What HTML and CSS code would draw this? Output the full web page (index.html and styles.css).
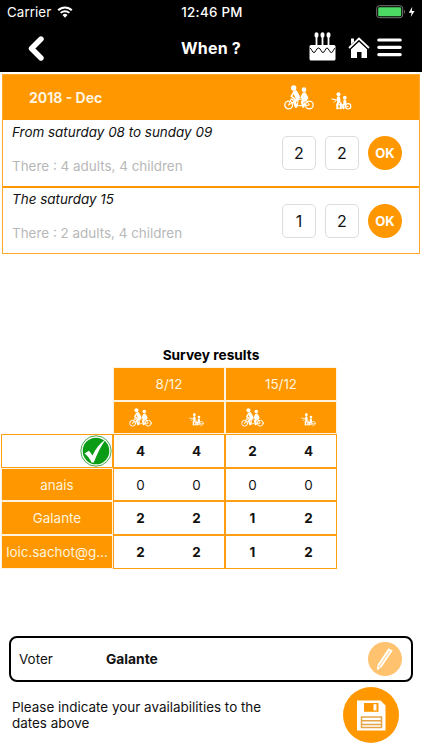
FILE: index.html
```html
<!DOCTYPE html>
<html lang="en">

<head>
    <meta charset="UTF-8">
    <meta name="viewport" content="width=device-width, initial-scale=1.0">
    <title>When ?</title>
    <link rel="stylesheet" href="styles.css">
</head>

<body>
    <!-- Shared icons -->
    <svg class="symbols">
        <symbol id="tandem" viewBox="0 0 90 75">
            <g fill="none" stroke="#fff" stroke-linecap="round" stroke-linejoin="round">
                <circle cx="14" cy="60" r="11.5" stroke-width="3.8" />
                <circle cx="76" cy="60" r="11.5" stroke-width="3.8" />
                <path d="M14 60L22 41L40 62H61L76 60L64 42M22 43L43 42L40 62M43 42L64 44L61 62M14 60L30 50" stroke-width="3" />
                <path d="M29 22L22 34L31 40" stroke-width="5" />
                <path d="M34 23L41 36" stroke-width="14" />
                <path d="M42 41L31 50L36 64" stroke-width="9" />
                <path d="M61 28L67 39" stroke-width="12" />
                <path d="M58 27L53 37L60 41M65 43L54 50L58 65" stroke-width="7" />
            </g>
            <circle cx="29" cy="9" r="8" fill="#fff" />
            <circle cx="60" cy="14" r="7" fill="#fff" />
        </symbol>
        <symbol id="kids" viewBox="0 0 62 54">
            <g fill="none" stroke="#fff" stroke-linecap="round" stroke-linejoin="round">
                <circle cx="51" cy="43" r="8" stroke-width="3.5" />
                <path d="M2 21L17 24M9 31L15 24M16 49H27M33 47L51 43M18 38H42" stroke-width="3" />
                <path d="M22 18L23 29" stroke-width="10" />
                <path d="M22 31L18 37L19 49M29 34V49" stroke-width="6" />
                <path d="M41 27L41 35" stroke-width="9" />
                <path d="M40 37L35 41L37 49" stroke-width="6" />
            </g>
            <circle cx="22" cy="7" r="6" fill="#fff" />
            <circle cx="41" cy="17" r="5.5" fill="#fff" />
        </symbol>
    </svg>

    <header class="header">
        <div class="status-bar">
            <div class="carrier">
                <span>Carrier</span>
                <svg class="wifi" viewBox="0 0 16 12">
                    <path d="M1.2 4.3A9.6 9.6 0 0 1 14.8 4.3M3.7 6.9A6.1 6.1 0 0 1 12.3 6.9" fill="none" stroke="#fff" stroke-width="2" />
                    <path d="M5.5 9A3.6 3.6 0 0 1 10.5 9L8 11.7Z" fill="#fff" />
                </svg>
            </div>
            <div class="time">12:46 PM</div>
            <div class="battery">
                <svg viewBox="0 0 40 14">
                    <rect x="0.7" y="0.7" width="26" height="12" rx="2.8" fill="none" stroke="#777" />
                    <rect x="2.2" y="2.2" width="23" height="9" rx="1.3" fill="#4cd964" />
                    <path d="M28 4.7Q30 6.7 28 8.7Z" fill="#777" />
                    <path d="M36.3 1.8L32.8 7.7H35.6L34.7 12L38.6 6H35.8Z" fill="#fff" />
                </svg>
            </div>
        </div>
        <nav class="nav">
            <svg class="back" viewBox="0 0 16 25">
                <path d="M13 3L3.5 12.5L13 22" fill="none" stroke="#fff" stroke-width="5.4" stroke-linecap="round" stroke-linejoin="round" />
            </svg>
            <h1>When ?</h1>
            <div class="nav-icons">
                <svg class="cake" viewBox="0 0 27 29">
                    <path d="M7.5 5V14M13.5 5V14M19.5 5V14" stroke="#fff" stroke-width="1.8" />
                    <g fill="#fff">
                        <ellipse cx="7.5" cy="3" rx="2" ry="2.8" />
                        <ellipse cx="13.5" cy="3" rx="2" ry="2.8" />
                        <ellipse cx="19.5" cy="3" rx="2" ry="2.8" />
                        <rect x="0.5" y="13" width="26" height="15.5" rx="1.5" />
                    </g>
                    <path d="M1 16C3 17 3 20.5 5 20.5S7.2 16 9.5 16S12 20.5 14 20.5S16.2 16 18 16S20.3 20.5 22.3 20.5S24.2 17 26.2 16" fill="none" stroke="#000" stroke-width="1" />
                </svg>
                <svg class="home" viewBox="0 0 22 22">
                    <path d="M11 4.7L19 12V21H13.5V15H9V21H3V12Z" fill="#fff" />
                    <path d="M1 11.5L11 2L21 11.5" fill="none" stroke="#000" stroke-width="3.4" />
                    <path d="M1 11L11 1.6L21 11" fill="none" stroke="#fff" stroke-width="1.8" />
                    <path d="M3 1.5H6V4.5L3 7.4Z" fill="#fff" />
                </svg>
                <svg class="menu" viewBox="0 0 25 19">
                    <path d="M1.8 2H23.2M1.8 9.3H23.2M1.8 16.6H23.2" stroke="#fff" stroke-width="3.2" stroke-linecap="round" />
                </svg>
            </div>
        </nav>
    </header>

    <main>
        <section class="dates">
            <div class="month">
                <h2>2018 - Dec</h2>
                <svg class="tandem"><use href="#tandem" /></svg>
                <svg class="kids"><use href="#kids" /></svg>
            </div>
            <div class="date">
                <div class="date-text">
                    <p class="day">From saturday 08 to sunday 09</p>
                    <p class="there">There : 4 adults, 4 children</p>
                </div>
                <div class="count">2</div>
                <div class="count">2</div>
                <button class="ok">OK</button>
            </div>
            <div class="date">
                <div class="date-text">
                    <p class="day">The saturday 15</p>
                    <p class="there">There : 2 adults, 4 children</p>
                </div>
                <div class="count">1</div>
                <div class="count">2</div>
                <button class="ok">OK</button>
            </div>
        </section>

        <section class="survey">
            <h3>Survey results</h3>
            <div class="results">
                <div></div>
                <div class="cell head">8/12</div>
                <div class="cell head">15/12</div>

                <div></div>
                <div class="cell head pair">
                    <svg class="tandem"><use href="#tandem" /></svg>
                    <svg class="kids"><use href="#kids" /></svg>
                </div>
                <div class="cell head pair">
                    <svg class="tandem"><use href="#tandem" /></svg>
                    <svg class="kids"><use href="#kids" /></svg>
                </div>

                <div class="cell check">
                    <svg viewBox="0 0 32 32">
                        <circle cx="16" cy="16" r="15.2" fill="#fff" stroke="#4aa84e" />
                        <circle cx="16" cy="16" r="13.3" fill="#0a9c14" />
                        <path d="M4.5 18.5L9 15.8L12.5 20.5C15.5 14 19.5 8.5 25.5 4.5C21 11 17 19 13.8 27.5H11.5C10 24 8 21 4.5 18.5Z" fill="#fff" />
                    </svg>
                </div>
                <div class="cell pair total"><span>4</span><span>4</span></div>
                <div class="cell pair total"><span>2</span><span>4</span></div>

                <div class="cell head">anais</div>
                <div class="cell pair"><span>0</span><span>0</span></div>
                <div class="cell pair"><span>0</span><span>0</span></div>

                <div class="cell head">Galante</div>
                <div class="cell pair total"><span>2</span><span>2</span></div>
                <div class="cell pair total"><span>1</span><span>2</span></div>

                <div class="cell head">loic.sachot@g...</div>
                <div class="cell pair total"><span>2</span><span>2</span></div>
                <div class="cell pair total"><span>1</span><span>2</span></div>
            </div>
        </section>
    </main>

    <footer>
        <div class="voter">
            <span class="label">Voter</span>
            <strong>Galante</strong>
            <svg class="edit" viewBox="0 0 34 34">
                <circle cx="17" cy="17" r="17" fill="#ffc370" />
                <path d="M20.5 6.3L24.7 8.5L13.2 25.8L9 28.2L9.2 23.3Z" fill="#fff" />
                <path d="M22 8.6L11.3 24.5" stroke="#ffc370" stroke-width="0.9" />
                <path d="M9.3 23.5L13 25.9" stroke="#ffc370" stroke-width="0.7" />
            </svg>
        </div>
        <div class="save-row">
            <p>Please indicate your availabilities to the dates above</p>
            <svg class="save" viewBox="0 0 56 56">
                <circle cx="28" cy="28" r="28" fill="#ff9800" />
                <path d="M14 13.5H37.5L42.5 18.5V43.5H14Z" fill="#fff" />
                <rect x="21" y="16" width="14.5" height="8.8" fill="#ff9800" />
                <rect x="30.5" y="17.2" width="3" height="6.2" fill="#fff" />
                <path d="M18 30H39M18 33.7H39M18 37.4H39M18 40.5H39M18.5 29.5V41M38.5 29.5V41" stroke="#e5a446" stroke-width="1.5" />
            </svg>
        </div>
    </footer>
</body>

</html>
```

FILE: styles.css
```css
* {
    box-sizing: border-box;
}

body {
    margin: 0;
    height: 750px;
    display: flex;
    flex-direction: column;
    background: #ffffff;
    color: #111111;
    font-family: Inter, sans-serif;
    font-size: 13.45px;
    overflow: hidden;
}

h1,
h2,
h3,
p {
    margin: 0;
}

svg {
    display: block;
    flex: none;
}

.symbols {
    width: 0;
    height: 0;
    position: absolute;
}

.header {
    height: 72px;
    background: #000000;
    color: #ffffff;
}

.status-bar {
    height: 24px;
    padding: 0 6px 0 7px;
    display: grid;
    grid-template-columns: 1fr auto 1fr;
    align-items: center;
    font-size: 13.3px;
}

.carrier {
    display: flex;
    align-items: center;
    gap: 6px;
    letter-spacing: 0.1px;
}

.wifi {
    width: 16px;
    height: 12px;
}

.time {
    padding-left: 1px;
    font-weight: 500;
    letter-spacing: 0.3px;
}

.battery {
    display: flex;
    justify-content: flex-end;
}

.battery svg {
    width: 40px;
    height: 14px;
}

.nav {
    height: 48px;
    padding: 0 20px 0 28px;
    display: grid;
    grid-template-columns: 1fr auto 1fr;
    align-items: center;
}

.back {
    width: 16px;
    height: 25px;
}

.nav h1 {
    font-size: 16px;
    font-weight: 700;
    padding-right: 8px;
    letter-spacing: 0.2px;
}

.nav-icons {
    display: flex;
    justify-content: flex-end;
    align-items: center;
}

.cake {
    width: 27px;
    height: 29px;
    margin: -4px 12px 0 0;
}

.home {
    width: 22px;
    height: 22px;
    margin-right: 7px;
}

.menu {
    width: 25px;
    height: 19px;
    margin-top: -1px;
}

.dates {
    margin: 2px 2px 0 2px;
    border: 1px solid #ffa82e;
}

.month {
    height: 45px;
    padding: 0 67px 0 26px;
    display: flex;
    align-items: center;
    background: #ff9800;
}

.month h2 {
    flex: 1;
    font-size: 14px;
    font-weight: 700;
    color: #fff3df;
}

.month .tandem {
    width: 30px;
    height: 25px;
    margin: -1px 17px 0 0;
}

.month .kids {
    width: 21px;
    height: 18px;
    margin-top: 6px;
}

.date {
    height: 66px;
    padding: 0 17px 0 9px;
    display: flex;
    align-items: center;
}

.date + .date {
    height: 67px;
    border-top: 2px solid #ff9800;
}

.date-text {
    flex: 1;
    height: 100%;
    padding-top: 4px;
}

.date + .date .date-text {
    padding-top: 3px;
}

.day {
    font-style: italic;
    line-height: 17px;
}

.there {
    margin-top: 17px;
    line-height: 17px;
    color: #b8b8b8;
}

.count {
    width: 34px;
    height: 34px;
    margin-right: 9px;
    border: 1px solid #dddddd;
    border-radius: 5px;
    font-size: 16px;
    line-height: 32px;
    text-align: center;
}

.ok {
    width: 34px;
    height: 34px;
    padding: 0;
    border: none;
    border-radius: 50%;
    background: #ff9800;
    color: #ffffff;
    font: 700 13px Inter, sans-serif;
}

.survey {
    margin-top: 91px;
}

.survey h3 {
    height: 22px;
    line-height: 20px;
    font-size: 13.7px;
    font-weight: 700;
    text-align: center;
    color: #000000;
}

.results {
    width: 337px;
    display: grid;
    grid-template-columns: 112px 112px 112px;
    grid-auto-rows: 33.6px;
    padding-left: 1px;
}

.cell {
    display: flex;
    align-items: center;
    justify-content: center;
    border: 1px solid #ff9e12;
}

.head {
    background: #ff9800;
    border-color: #fff3df;
    color: #fff3df;
}

.pair {
    display: grid;
    grid-template-columns: 53px 55px;
    gap: 2px;
    justify-items: center;
}

.total {
    font-weight: 700;
}

.pair .tandem {
    width: 23px;
    height: 19px;
}

.pair .kids {
    width: 15px;
    height: 13px;
    margin-top: 5px;
}

.check {
    justify-content: flex-end;
}

.check svg {
    width: 32px;
    height: 32px;
}

footer {
    margin-top: auto;
    height: 114px;
}

.voter {
    height: 46px;
    margin: 0 9px;
    padding: 0 9px 0 8px;
    display: flex;
    align-items: center;
    border: 2px solid #000000;
    border-radius: 8px;
}

.label {
    width: 87px;
}

.voter strong {
    flex: 1;
    font-size: 13.8px;
}

.edit {
    width: 34px;
    height: 34px;
}

.save-row {
    padding: 5px 23px 0 12px;
    display: flex;
    justify-content: space-between;
    align-items: center;
}

.save-row p {
    width: 255px;
    line-height: 16px;
}

.save {
    width: 56px;
    height: 56px;
}
```
